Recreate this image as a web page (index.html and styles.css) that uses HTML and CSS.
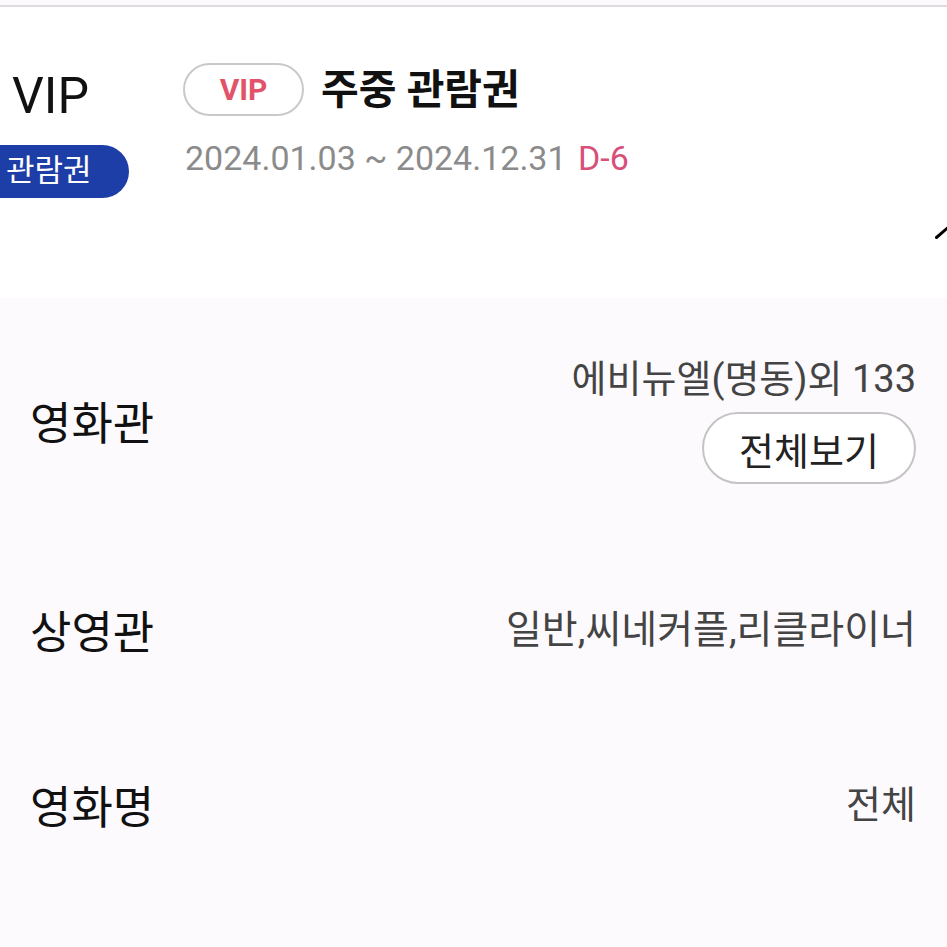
FILE: index.html
```
<!DOCTYPE html>
<html lang="ko">
<head>
    <meta charset="UTF-8">
    <meta name="viewport" content="width=device-width, initial-scale=1.0">
    <link rel="stylesheet" href="styles.css">
    <title>주중 관람권</title>
</head>
<body>
    <div class="topline"></div>

    <!-- Ticket summary -->
    <header class="ticket">
        <div class="grade">
            <div class="grade-name">VIP</div>
            <div class="grade-tag">관람권</div>
        </div>
        <div class="info">
            <div class="title-row">
                <span class="badge">VIP</span>
                <h1 class="title">주중 관람권</h1>
            </div>
            <div class="period">2024.01.03 ~ 2024.12.31 <span class="dday">D-6</span></div>
        </div>
        <svg class="toggle" width="12" height="14" viewBox="0 0 12 14">
            <polyline points="1.5,12.5 13,2.5" fill="none" stroke="#000" stroke-width="3" stroke-linecap="round"/>
        </svg>
    </header>

    <!-- Ticket details -->
    <section class="details">
        <div class="row row-first">
            <div class="label">영화관</div>
            <div class="value-group">
                <div class="value">에비뉴엘(명동)외 133</div>
                <button type="button" class="more">전체보기</button>
            </div>
        </div>
        <div class="row">
            <div class="label">상영관</div>
            <div class="value value-wide">일반,씨네커플,리클라이너</div>
        </div>
        <div class="row">
            <div class="label">영화명</div>
            <div class="value">전체</div>
        </div>
    </section>
</body>
</html>
```
FILE: styles.css
```
html, body {
    margin: 0;
    padding: 0;
    width: 947px;
    height: 947px;
    overflow: hidden;
}

body {
    font-family: Roboto, "Noto Sans CJK KR", sans-serif;
    background-color: #fcfafd;
    color: #111;
}

.topline {
    margin-top: 5px;
    height: 2px;
    background-color: #dcdcdc;
}

.ticket {
    position: relative;
    display: flex;
    align-items: flex-start;
    height: 235px;
    padding-top: 56px;
    background-color: #fff;
}

.grade {
    width: 183px;
    flex-shrink: 0;
    padding-top: 3px;
}

.grade-name {
    margin-left: 12px;
    font-size: 50px;
    line-height: 60px;
    color: #111;
}

.grade-tag {
    display: inline-block;
    box-sizing: border-box;
    width: 129px;
    margin-top: 19px;
    height: 53px;
    line-height: 51px;
    padding-left: 6px;
    background-color: #1d3ea7;
    color: #fff;
    font-size: 31px;
    border-radius: 0 27px 27px 0;
}

.title-row {
    display: flex;
    align-items: center;
}

.badge {
    box-sizing: border-box;
    width: 121px;
    height: 53px;
    line-height: 49px;
    border: 2px solid #c9c9c9;
    border-radius: 27px;
    text-align: center;
    color: #e2536a;
    font-size: 30px;
    font-weight: bold;
}

.title {
    margin: 0 0 0 17px;
    font-size: 41px;
    font-weight: bold;
    line-height: 50px;
    color: #111;
}

.period {
    margin-top: 20px;
    margin-left: 2px;
    font-size: 34px;
    line-height: 44px;
    color: #8b8b8b;
}

.dday {
    margin-left: 3px;
    color: #d8507a;
}

.toggle {
    position: absolute;
    right: 0;
    top: 218px;
    overflow: visible;
}

.details {
    padding: 0 31px 0 30px;
}

.row {
    display: flex;
    justify-content: space-between;
    align-items: center;
    height: 175px;
}

.row-first {
    height: 244px;
}

.label {
    font-size: 45px;
    color: #111;
}

.value-group {
    display: flex;
    flex-direction: column;
    align-items: flex-end;
}

.value {
    font-size: 38px;
    line-height: 46px;
    color: #444;
}

.value-wide {
    font-size: 39px;
}

.more {
    margin-top: 10px;
    box-sizing: border-box;
    width: 214px;
    height: 72px;
    border: 2px solid #c4c4c4;
    border-radius: 36px;
    background-color: #fff;
    font-family: Roboto, "Noto Sans CJK KR", sans-serif;
    font-size: 38px;
    color: #222;
    padding: 0;
}
```
